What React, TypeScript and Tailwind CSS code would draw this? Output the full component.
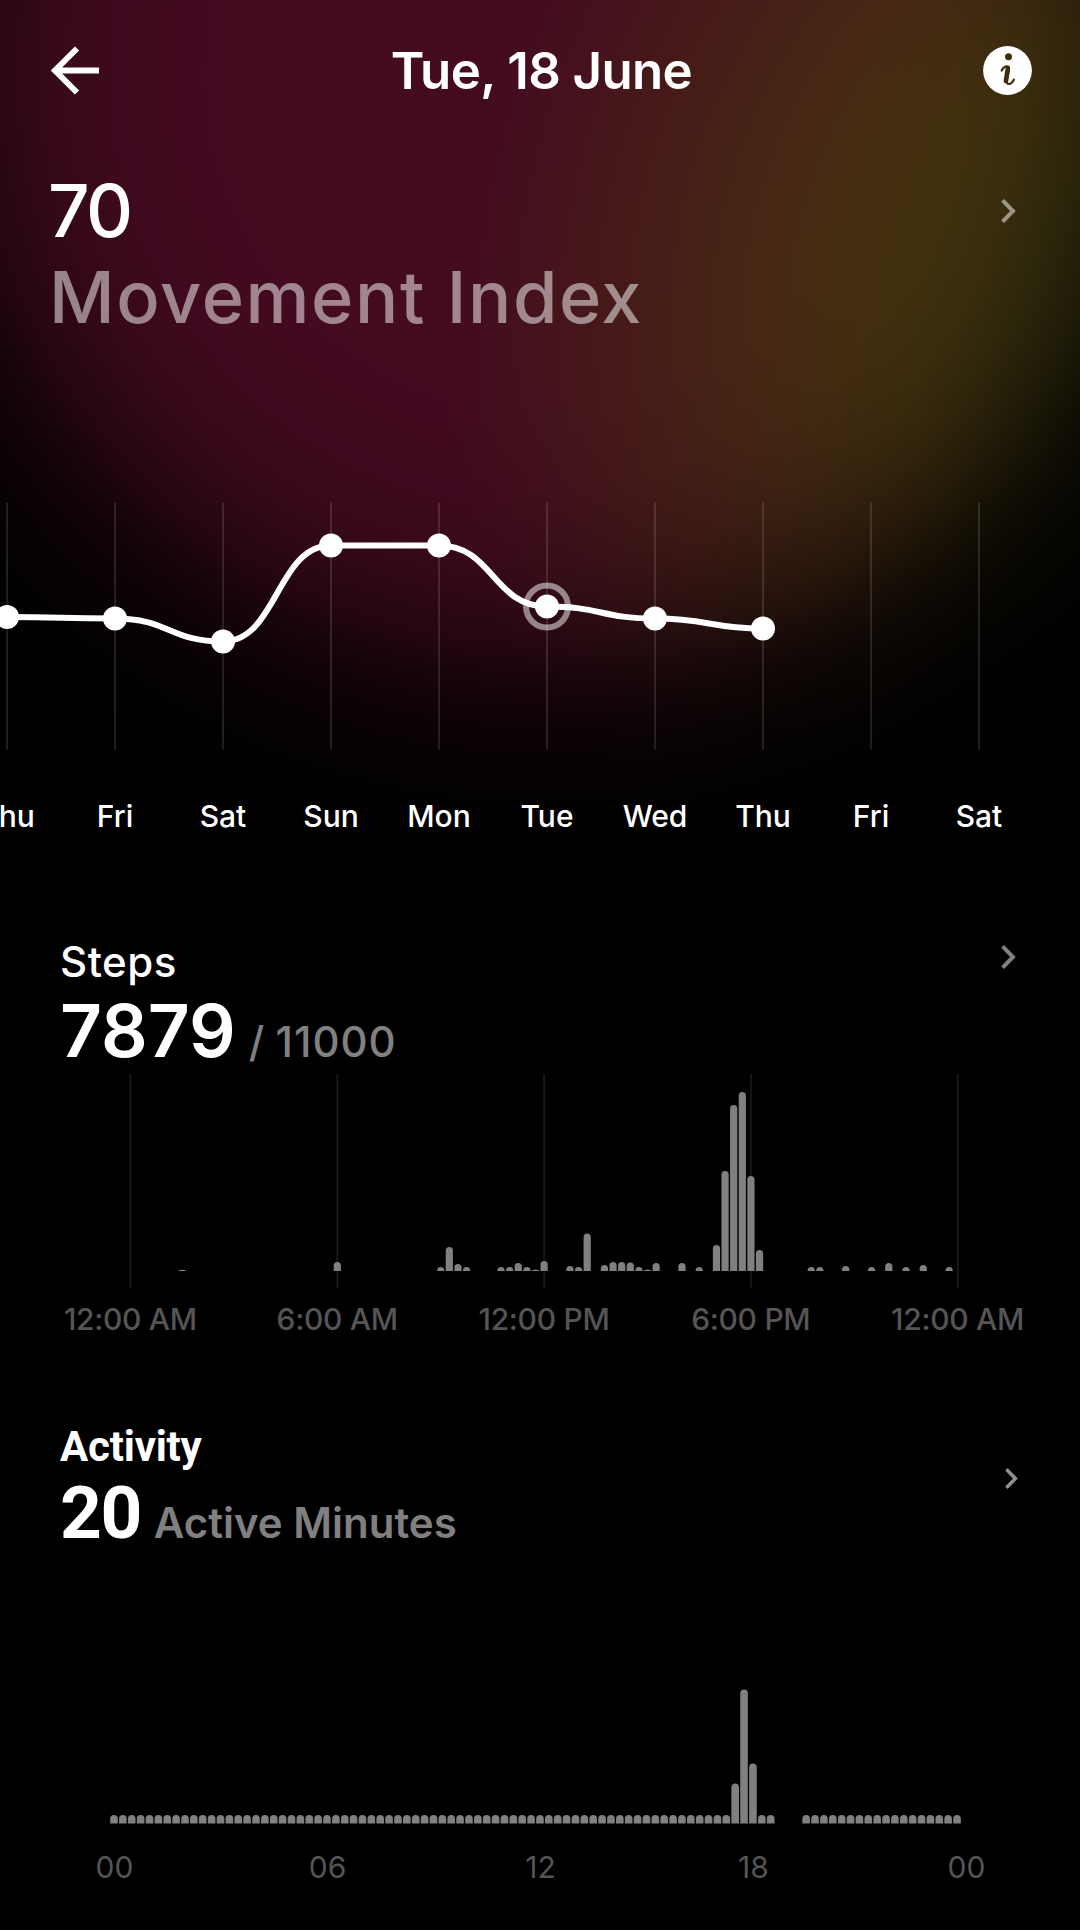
interface Bar {
    slot: number;
    height: number;
}

interface DayPoint {
    x: number;
    y: number;
    selected?: boolean;
}

const days = ['Thu', 'Fri', 'Sat', 'Sun', 'Mon', 'Tue', 'Wed', 'Thu', 'Fri', 'Sat'];

const points: DayPoint[] = [
    { x: 7, y: 127 },
    { x: 115, y: 128.5 },
    { x: 223, y: 151.5 },
    { x: 331, y: 55.5 },
    { x: 439, y: 55.5 },
    { x: 547, y: 116.5, selected: true },
    { x: 655, y: 128.5 },
    { x: 763, y: 138.5 },
];

// one slot = 15 minutes
const stepBars: Bar[] = [
    [6, 1.2], [24, 9], [36, 4], [37, 24], [38, 7], [39, 4],
    [43, 4], [44, 4], [45, 8], [46, 4], [47, 1.5], [48, 10],
    [51, 5], [52, 4], [53, 37.5], [55, 6], [56, 9], [57, 9], [58, 8.5], [59, 4], [60, 1.5], [61, 8],
    [64, 8], [66, 4], [68, 26], [69, 100], [70, 166], [71, 179], [72, 95], [73, 21],
    [79, 4], [80, 4], [83, 5], [86, 4], [88, 8], [90, 4], [92, 6], [95, 4],
].map(([slot, height]) => ({ slot, height }));

const activityPeaks: Record<number, number> = { 70: 40, 71: 134, 72: 60 };

const activityBars: Bar[] = Array.from({ length: 96 }, (_, slot) => ({
    slot,
    height: activityPeaks[slot] ?? 8.5,
})).filter(({ slot }) => slot < 75 || slot > 77);

const barPath = (cx: number, base: number, height: number, width: number) => {
    const r = Math.min(width / 2, height);
    const left = cx - width / 2;
    return `M${left} ${base}V${base - height + r}a${width / 2} ${r} 0 0 1 ${width} 0V${base}Z`;
};

const linePath = points
    .map((p, i) => {
        if (i === 0) return `M${p.x} ${p.y}`;
        const prev = points[i - 1];
        const mid = (prev.x + p.x) / 2;
        return `C${mid} ${prev.y} ${mid} ${p.y} ${p.x} ${p.y}`;
    })
    .join('');

function Chevron({ className = '' }: { className?: string }) {
    return (
        <svg viewBox="0 0 15 24" fill="none" stroke="currentColor" strokeWidth="4" className={className}>
            <path d="M1.6 1.4 12 12 1.6 22.6" />
        </svg>
    );
}

function BackArrow() {
    return (
        <svg viewBox="0 0 50 50" fill="none" stroke="currentColor" strokeWidth="6" className="size-[50px]">
            <path d="M27 2.5 5 24.5 27 46.5M5 24.5H49" />
        </svg>
    );
}

function InfoIcon() {
    return (
        <svg viewBox="0 0 49 49" fill="none" stroke="#3d2c10" strokeLinecap="round" className="size-[49px]">
            <circle cx="24.5" cy="24.5" r="24.4" fill="#fff" stroke="none" />
            <circle cx="25.5" cy="10.8" r="3.5" fill="#3d2c10" stroke="none" />
            <path d="M18.6 24.6c1.4-3 3.8-4.3 5.4-4.3s2.2 1.1 1.9 2.9l-2 11.3c-.4 2.4.3 3.4 1.9 3.4 1.9 0 3.9-1.5 5-4.3" strokeWidth="2.2" />
            <path d="m24.9 22.3-2 12.7" strokeWidth="4.6" />
        </svg>
    );
}

function TrendChart() {
    return (
        <svg viewBox="0 0 1080 270" className="mt-[157px] h-[270px] w-full">
            {days.map((_, i) => (
                <line key={i} x1={7 + i * 108} x2={7 + i * 108} y1="12.5" y2="259.5" stroke="#fff" strokeOpacity="0.12" strokeWidth="2" />
            ))}
            {points.filter((p) => p.selected).map((p) => (
                <circle key={p.x} cx={p.x} cy={p.y} r="21" fill="none" stroke="#fff" strokeOpacity="0.5" strokeWidth="6" />
            ))}
            <path d={linePath} fill="none" stroke="#fff" strokeWidth="6" />
            {points.map((p) => (
                <circle key={p.x} cx={p.x} cy={p.y} r="12" fill="#fff" />
            ))}
        </svg>
    );
}

export default function App() {
    return (
        <main className="flex h-[1930px] w-[1080px] flex-col overflow-hidden bg-black bg-[radial-gradient(circle_at_545px_75px,transparent_320px,rgba(0,0,0,0.05)_410px,rgba(0,0,0,0.16)_480px,rgba(0,0,0,0.31)_530px,rgba(0,0,0,0.46)_570px,rgba(0,0,0,0.63)_605px,rgba(0,0,0,0.79)_645px,rgba(0,0,0,0.9)_690px,rgba(0,0,0,0.97)_740px,#000_810px),radial-gradient(circle_at_1250px_330px,#3e370f_200px,#45330f_350px,#472914_480px,#461a19_630px,#44101d_740px,#430a20_810px)] font-['Inter',sans-serif] text-white">
            <header className="flex h-[141px] shrink-0 items-center justify-between pr-12 pl-[50px]">
                <BackArrow />
                <h1 className="text-[51px] leading-none font-semibold tracking-[-0.6px]">Tue, 18 June</h1>
                <InfoIcon />
            </header>

            <section>
                <div className="flex items-start justify-between pt-[33px] pr-16 pl-12 font-medium">
                    <div>
                        <p className="text-[73px] leading-[73px] tracking-[-2.5px]">70</p>
                        <h2 className="mt-3.5 ml-px text-[72px] leading-[72px] tracking-[1.6px] text-white/50">Movement Index</h2>
                    </div>
                    <Chevron className="mt-[25px] h-6 w-[15px] text-white/50" />
                </div>
                <TrendChart />
                <ul className="mt-9 -ml-[47px] grid w-[1080px] grid-cols-10 text-center text-[30px] leading-10 font-medium">
                    {days.map((day, i) => (
                        <li key={i}>{day}</li>
                    ))}
                </ul>
            </section>

            <section className="mt-[101px]">
                <div className="flex items-start justify-between pr-16 pl-[60px]">
                    <div>
                        <h2 className="text-[42px] leading-[50px] font-medium tracking-[0.5px]">Steps</h2>
                        <p className="mt-2 flex items-baseline text-[73px] leading-[72px] font-semibold">
                            7879
                            <span className="ml-[13px] text-[42px] leading-none font-medium tracking-[1px] [word-spacing:-2px] text-[#808080]">/ 11000</span>
                        </p>
                    </div>
                    <Chevron className="mt-2 h-6 w-[15px] text-[#808080]" />
                </div>
                <svg viewBox="0 0 1080 229" className="h-[229px] w-full">
                    {[0, 1, 2, 3, 4].map((i) => (
                        <line key={i} x1={130.5 + i * 206.8} x2={130.5 + i * 206.8} y1="7" y2="221.5" stroke="#1c1c1c" strokeWidth="1.6" />
                    ))}
                    {stepBars.map(({ slot, height }) => (
                        <path key={slot} d={barPath(130.5 + slot * 8.617, 204, height, 7.2)} fill="#808080" />
                    ))}
                </svg>
                <ul className="mt-[3px] ml-[27px] grid w-[1034px] grid-cols-5 text-center text-[30px] leading-10 font-medium tracking-[-0.3px] text-[#555]">
                    <li>12:00 AM</li>
                    <li>6:00 AM</li>
                    <li>12:00 PM</li>
                    <li>6:00 PM</li>
                    <li>12:00 AM</li>
                </ul>
            </section>

            <section className="mt-[83px]">
                <div className="flex items-start justify-between pr-[62px] pl-[60px] font-['Roboto',sans-serif]">
                    <div>
                        <h2 className="text-[42px] leading-[50px] font-bold tracking-[-0.2px]">Activity</h2>
                        <p className="mt-[5px] flex items-baseline text-[73px] leading-[72px] font-bold tracking-[-1.5px]">
                            20
                            <span className="ml-[13px] font-['Inter',sans-serif] text-[42px] leading-none font-semibold tracking-normal text-[#808080]">Active Minutes</span>
                        </p>
                    </div>
                    <Chevron className="mt-[46px] h-[21px] w-[13px] text-[#909090]" />
                </div>
                <svg viewBox="0 0 1080 281" className="h-[281px] w-full">
                    {activityBars.map(({ slot, height }) => (
                        <path key={slot} d={barPath(114 + slot * 8.874, 274.5, height, 7.6)} fill="#808080" />
                    ))}
                </svg>
                <ul className="mt-[17px] ml-2 grid w-[1065px] grid-cols-5 text-center text-[30px] leading-10 text-[#555]">
                    <li>00</li>
                    <li>06</li>
                    <li>12</li>
                    <li>18</li>
                    <li>00</li>
                </ul>
            </section>
        </main>
    );
}
